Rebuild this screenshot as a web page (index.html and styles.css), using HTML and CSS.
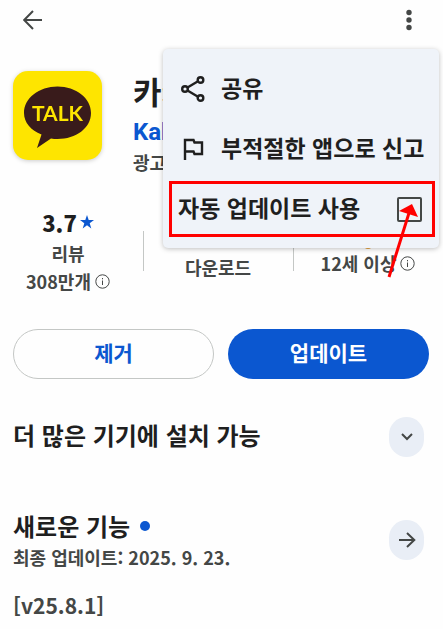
FILE: index.html
```html
<!DOCTYPE html>
<html lang="ko">
<head>
<meta charset="utf-8">
<meta name="viewport" content="width=device-width, initial-scale=1">
<title>카카오톡</title>
<link rel="stylesheet" href="styles.css">
</head>
<body>
<header class="topbar">
  <button class="icon-button" type="button" aria-label="뒤로">
    <svg width="20" height="20" viewBox="0 0 20 20"><path d="M19 10H1.5M10 1 1.2 10 10 19"/></svg>
  </button>
  <div class="overflow">
    <button class="icon-button" type="button" aria-label="옵션 더보기">
      <svg class="dots" width="6" height="22" viewBox="0 0 6 22"><circle cx="3" cy="3.5" r="2.7"/><circle cx="3" cy="11" r="2.7"/><circle cx="3" cy="18.5" r="2.7"/></svg>
    </button>
    <div class="menu">
      <button class="menu-item" type="button">
        <svg width="24" height="26" viewBox="0 0 24 26"><path d="M6.5 11.5 17 5.2M6.5 14.5 17 20.8"/><circle cx="4" cy="13" r="2.8"/><circle cx="19.5" cy="4" r="2.8"/><circle cx="19.5" cy="22" r="2.8"/></svg>
        <span>공유</span>
      </button>
      <button class="menu-item" type="button">
        <svg width="24" height="26" viewBox="0 0 24 26"><path d="M4 24V4H12.500L13.500 6.500H21V18H13.500L12.500 15.500H4"/></svg>
        <span>부적절한 앱으로 신고</span>
      </button>
      <label class="menu-item highlighted">
        <span>자동 업데이트 사용</span>
        <input class="check" type="checkbox">
      </label>
      <svg class="pointer" width="36" height="76" viewBox="0 0 36 76"><path class="shaft" d="M2 74 22 10"/><path class="head" d="M25 1 12 8 31 14Z"/></svg>
    </div>
  </div>
</header>
<main>
  <section class="app">
    <svg class="app-icon" width="89" height="89" viewBox="0 0 89 89" role="img" aria-label="TALK">
      <rect class="tile" width="89" height="89" rx="15"/>
      <path class="bubble" d="M44.500 15.500C63 15.500 78 27 78 42S63 68 44.500 68Q41 68 38 67.500L24 77 28.500 63.500C18 59.500 11 51.500 11 42 11 27 26 15.500 44.500 15.500Z"/>
      <text x="44.500" y="50" text-anchor="middle">TALK</text>
    </svg>
    <div class="app-text">
      <h1>카카오</h1>
      <a class="developer" href="#developer">Kakao</a>
      <p class="ads">광고 포함</p>
    </div>
  </section>
  <section class="stats">
    <div class="stat">
      <strong class="score">3.7 <svg class="star" width="14" height="14" viewBox="0 0 14 14"><path d="M7 0 8.700 5H14L9.700 8.200 11.300 13.500 7 10.300 2.700 13.500 4.300 8.200 0 5H5.300Z"/></svg></strong>
      <span>리뷰</span>
      <span class="with-info">308만개 <svg class="info" width="15" height="15" viewBox="0 0 15 15"><circle cx="7.500" cy="7.500" r="6.700"/><path d="M7.500 6.500V11M7.500 4V5.300"/></svg></span>
    </div>
    <div class="stat split centered">
      <span>다운로드</span>
    </div>
    <div class="stat split rated">
      <i class="rating-mark"></i>
      <span class="with-info">12세 이상 <svg class="info" width="15" height="15" viewBox="0 0 15 15"><circle cx="7.500" cy="7.500" r="6.700"/><path d="M7.500 6.500V11M7.500 4V5.300"/></svg></span>
    </div>
  </section>
  <div class="actions">
    <button class="action outline" type="button">제거</button>
    <button class="action filled" type="button">업데이트</button>
  </div>
  <section class="row devices">
    <h2>더 많은 기기에 설치 가능</h2>
    <button class="round" type="button" aria-label="펼치기">
      <svg width="14" height="10" viewBox="0 0 14 10"><path d="M2 2 7 7 12 2"/></svg>
    </button>
  </section>
  <section class="row news">
    <div>
      <h2>새로운 기능<i class="new-dot"></i></h2>
      <p class="updated">최종 업데이트: 2025. 9. 23.</p>
    </div>
    <button class="round" type="button" aria-label="자세히">
      <svg width="18" height="18" viewBox="0 0 18 18"><path d="M1 9H16M9 2 16.300 9 9 16"/></svg>
    </button>
  </section>
  <p class="version">[v25.8.1]</p>
</main>
</body>
</html>
```
FILE: styles.css
```css
* { box-sizing: border-box; }
body {
  margin: 0;
  background: #fefefe;
  color: #1f1f1f;
  font-family: "Noto Sans CJK KR", sans-serif;
  font-weight: 700;
}
h1, h2, p { margin: 0; font-weight: 700; }
button {
  margin: 0;
  padding: 0;
  border: 0;
  background: none;
  color: inherit;
  font: inherit;
  cursor: pointer;
}
svg {
  display: block;
  flex: none;
  fill: none;
  stroke: #444746;
  stroke-width: 2;
}
.topbar {
  display: flex;
  justify-content: space-between;
  align-items: center;
  height: 40px;
  padding: 0 24px 0 13px;
}
.icon-button {
  display: grid;
  place-items: center;
  width: 40px;
  height: 40px;
}
.overflow { position: relative; }
.overflow .icon-button { width: 20px; }
.dots { fill: #444746; stroke: none; }
.menu {
  position: absolute;
  z-index: 1;
  top: 49px;
  right: -20px;
  width: 276px;
  padding: 10px 4px 10px 6px;
  border-radius: 5px;
  background: #eff3f9;
  box-shadow: 0 1px 5px rgba(0, 0, 0, 0.25);
}
.menu-item {
  display: flex;
  align-items: center;
  gap: 16px;
  width: 100%;
  height: 60px;
  padding: 0 12px;
  font-size: 23px;
  line-height: 32px;
  white-space: nowrap;
}
.menu-item span { padding-bottom: 4px; }
.menu-item svg { stroke: #1f1f1f; stroke-width: 2.4; }
.menu-item.highlighted {
  justify-content: space-between;
  height: 56px;
  margin: 2px 0 1px;
  padding: 0 10px 0 6px;
  border: 3px solid #ff0000;
}
.check {
  appearance: none;
  width: 25px;
  height: 25px;
  margin: 0;
  border: 2px solid #444746;
  border-radius: 2px;
}
.pointer {
  position: absolute;
  right: 16px;
  bottom: -31px;
  pointer-events: none;
}
.pointer .shaft { stroke: #ff0000; stroke-width: 3; }
.pointer .head { fill: #ff0000; stroke: none; }
.app {
  display: flex;
  gap: 31px;
  padding: 31px 13px 0;
}
.app-icon { filter: drop-shadow(0 1px 2px rgba(0, 0, 0, 0.2)); }
.app-icon * { stroke: none; }
.tile { fill: #fee500; }
.bubble { fill: #391b1b; }
.app-icon text {
  fill: #fee500;
  font-family: Lato, sans-serif;
  font-size: 21px;
  font-weight: 700;
}
.app-text { min-width: 0; white-space: nowrap; }
h1 { font-size: 31px; line-height: 40px; }
.developer {
  display: block;
  color: #0b57d0;
  font-family: Roboto, sans-serif;
  font-size: 24px;
  font-weight: 700;
  line-height: 42px;
  text-decoration: none;
}
.ads {
  color: #444746;
  font-size: 18px;
  line-height: 18px;
}
.stats {
  display: grid;
  grid-template-columns: 143fr 150fr 150fr;
  padding-top: 34px;
}
.stat {
  position: relative;
  display: flex;
  flex-direction: column;
  align-items: center;
  color: #444746;
  font-size: 18px;
  line-height: 28px;
  white-space: nowrap;
}
.stat:first-child { padding-right: 7px; }
.split::before {
  content: "";
  position: absolute;
  top: 26px;
  left: 0;
  width: 1px;
  height: 40px;
  background: #c4c7c5;
}
.centered { padding-top: 48px; }
.rated { padding-top: 36px; }
.rating-mark {
  width: 8px;
  height: 8px;
  border-radius: 4px;
  background: #e6a23c;
}
.score {
  display: flex;
  align-items: center;
  gap: 3px;
  color: #1f1f1f;
  font-size: 22px;
  line-height: 34px;
}
.star { fill: #0b57d0; stroke: none; }
.with-info { display: flex; align-items: center; gap: 4px; }
.info { stroke-width: 1; }
.actions {
  display: grid;
  grid-template-columns: 1fr 1fr;
  gap: 14px;
  padding: 34px 14px 0 13px;
}
.action {
  height: 50px;
  padding-bottom: 4px;
  border-radius: 25px;
  font-size: 21px;
  line-height: 30px;
}
.outline { border: 1px solid #c4c7c5; color: #0b57d0; }
.filled { background: #0b57d0; color: #ffffff; }
.row {
  display: flex;
  justify-content: space-between;
  align-items: center;
  padding: 0 19px 0 13px;
}
.devices { margin-top: 38px; }
.news { margin-top: 54px; }
h2 {
  display: flex;
  align-items: center;
  gap: 10px;
  padding-bottom: 4px;
  font-size: 24px;
  line-height: 30px;
}
.new-dot {
  width: 10px;
  height: 10px;
  border-radius: 5px;
  background: #0b57d0;
}
.round {
  display: grid;
  place-items: center;
  width: 35px;
  height: 40px;
  border-radius: 18px;
  background: #e9eef6;
}
.updated {
  color: #444746;
  font-size: 18px;
  line-height: 24px;
}
.version {
  padding: 20px 13px 0;
  color: #444746;
  font-size: 21px;
  line-height: 32px;
}
```
